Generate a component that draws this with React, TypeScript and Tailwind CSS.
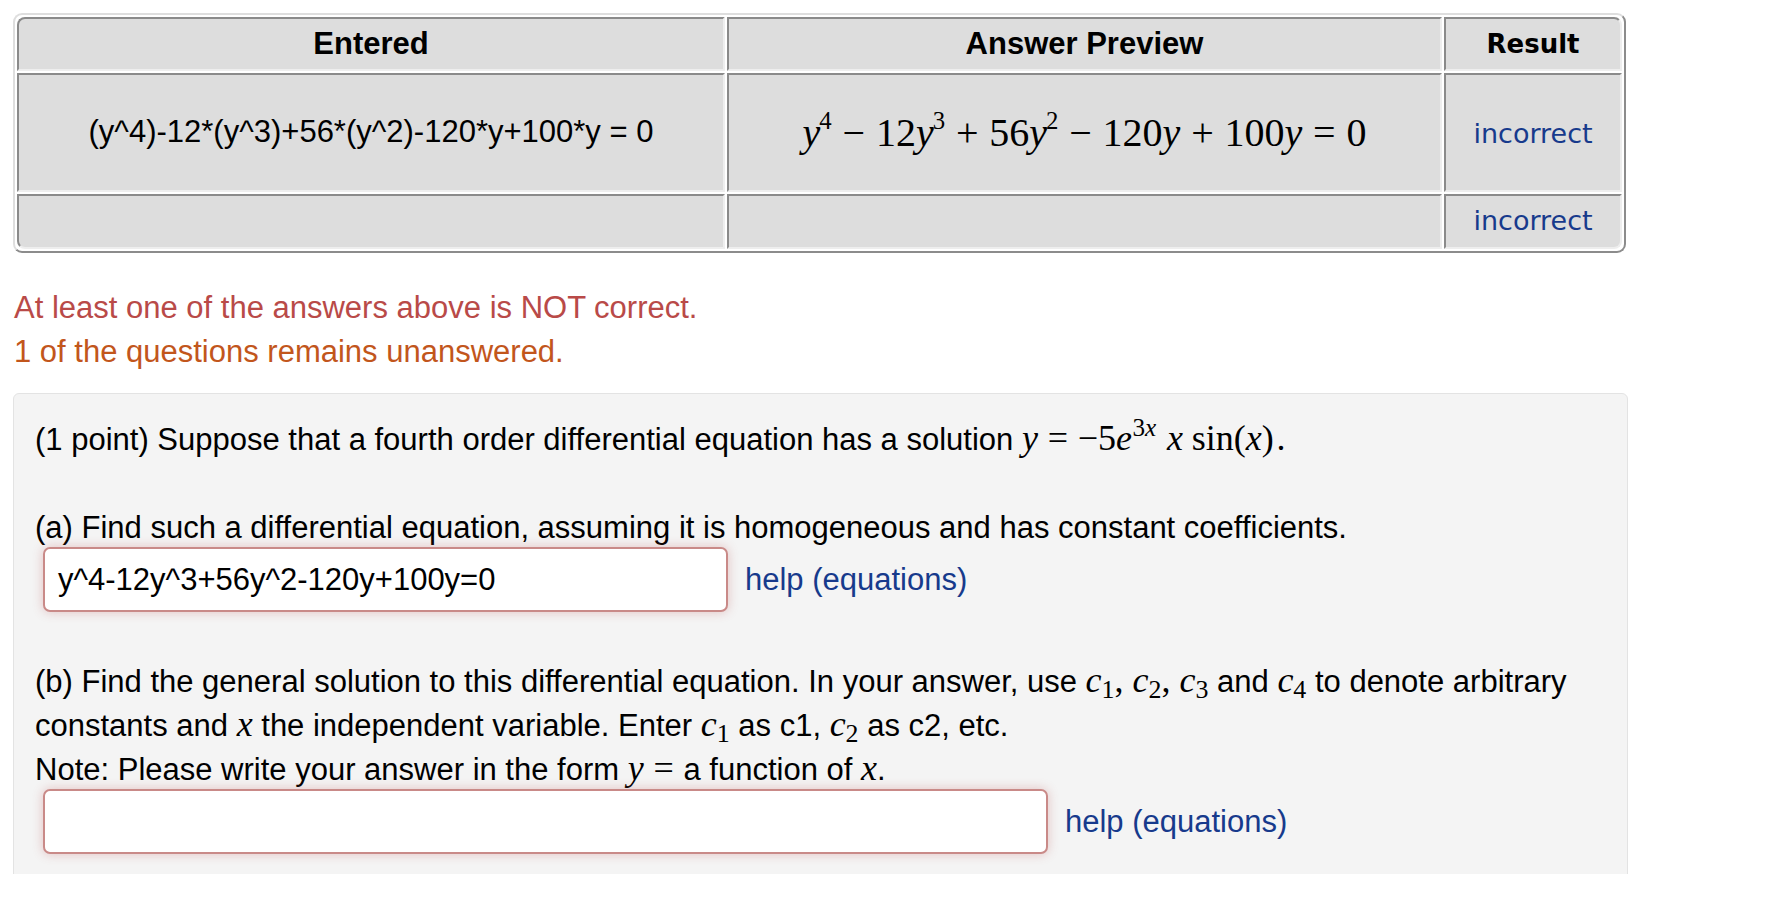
import React from "react";

const serif = 'font-["Liberation_Serif","Times_New_Roman",serif]';
const mathCls = 'font-["Liberation_Serif","Times_New_Roman",serif] text-[36px]';
const linkCls = "text-[#173a8c]";

const cellBase =
  "bg-[#dddddd] border-2 border-t-[#8a8a8a] border-l-[#8a8a8a] border-b-[#eeeeee] border-r-[#eeeeee] text-center align-middle p-0";

function V({ children }: { children: React.ReactNode }) {
  return <i className="italic">{children}</i>;
}

function Op({ children }: { children: React.ReactNode }) {
  return <span className="mx-[0.27em]">{children}</span>;
}

function C({ n }: { n: number }) {
  return (
    <span className={mathCls}>
      <V>c</V>
      <sub className="text-[72%] not-italic">{n}</sub>
    </span>
  );
}

function PreviewEquation() {
  const sup = "text-[62%] -top-[0.66em] -ml-[0.04em]";
  return (
    <span className={`${serif} text-[40px] text-black`}>
      <V>y</V>
      <sup className={sup}>4</sup>
      <Op>−</Op>12<V>y</V>
      <sup className={sup}>3</sup>
      <Op>+</Op>56<V>y</V>
      <sup className={sup}>2</sup>
      <Op>−</Op>120<V>y</V>
      <Op>+</Op>100<V>y</V>
      <Op>=</Op>0
    </span>
  );
}

function AttemptTable() {
  return (
    <table className="table-fixed border-separate border-spacing-[2px] w-[1613px] rounded-[9px] border-2 border-t-[#dedede] border-l-[#dedede] border-b-[#8c8c8c] border-r-[#8c8c8c]">
      <thead>
        <tr>
          <th className={`${cellBase} w-[708px] h-[54px] rounded-tl-[8px] text-[31px] font-bold`}>Entered</th>
          <th className={`${cellBase} w-[715px] h-[54px] text-[31px] font-bold`}>Answer Preview</th>
          <th
            className={`${cellBase} w-[178px] h-[54px] rounded-tr-[8px] text-[26px] font-bold font-["DejaVu_Sans",Verdana,sans-serif]`}
          >
            Result
          </th>
        </tr>
      </thead>
      <tbody>
        <tr>
          <td className={`${cellBase} h-[119px] text-[31px]`}>(y^4)-12*(y^3)+56*(y^2)-120*y+100*y = 0</td>
          <td className={`${cellBase} h-[119px]`}>
            <PreviewEquation />
          </td>
          <td
            className={`${cellBase} h-[119px] pt-[4px] bg-[#cd9595] text-[27px] font-["DejaVu_Sans",Verdana,sans-serif] ${linkCls}`}
          >
            incorrect
          </td>
        </tr>
        <tr>
          <td className={`${cellBase} h-[55px] rounded-bl-[8px]`}></td>
          <td className={`${cellBase} h-[55px]`}></td>
          <td
            className={`${cellBase} h-[55px] rounded-br-[8px] bg-[#cd9595] text-[27px] font-["DejaVu_Sans",Verdana,sans-serif] ${linkCls}`}
          >
            incorrect
          </td>
        </tr>
      </tbody>
    </table>
  );
}

function AnswerInput({ value, width }: { value: string; width: string }) {
  return (
    <div
      className={`${width} h-[65px] flex items-center bg-white border-2 border-[#c98a88] rounded-[7px] pl-[13px] shadow-[0_0_11px_rgba(185,74,72,0.3)] text-[31px] text-black`}
    >
      {value}
    </div>
  );
}

export default function App() {
  return (
    <div className='w-[1770px] h-[874px] overflow-hidden bg-white font-["Liberation_Sans",Arial,sans-serif] text-black pl-[13px] pt-[13px]'>
      <AttemptTable />

      {/* summary messages */}
      <div className="mt-[33px] text-[31px] leading-[44px] pl-[1px]">
        <div className="text-[#b94a48]">At least one of the answers above is NOT correct.</div>
        <div className="text-[#c2561c]">1 of the questions remains unanswered.</div>
      </div>

      {/* problem body */}
      <div className="mt-[19px] w-[1615px] h-[600px] bg-[#f4f4f4] border border-[#e3e3e3] rounded-[6px] pl-[21px] pt-[22px] text-[31px] leading-[44px]">
        <p>
          (1 point) Suppose that a fourth order differential equation has a solution{" "}
          <span className={mathCls}>
            <V>y</V>
            <Op>=</Op>−5<V>e</V>
            <sup className="text-[70%] -top-[0.55em] ml-[0.02em]">
              3<V>x</V>
            </sup>
            <V>
              <span className="ml-[0.3em]">x</span>
            </V>
            <span className="ml-[0.24em]">sin</span>(<V>x</V>)<span className="ml-[0.08em]">.</span>
          </span>
        </p>

        <p className="mt-[44px]">
          (a) Find such a differential equation, assuming it is homogeneous and has constant coefficients.
        </p>
        <div className="flex items-center gap-[17px] ml-[8px] -mt-[3px]">
          <AnswerInput value="y^4-12y^3+56y^2-120y+100y=0" width="w-[685px]" />
          <span className={linkCls}>help (equations)</span>
        </div>

        <div className="mt-[47px] leading-[43px]">
          <p>
            (b) Find the general solution to this differential equation. In your answer, use <C n={1} />
            <span className={mathCls}>, </span>
            <C n={2} />
            <span className={mathCls}>, </span>
            <C n={3} /> and <C n={4} /> to denote arbitrary
          </p>
          <p>
            constants and{" "}
            <span className={mathCls}>
              <V>x</V>
            </span>{" "}
            the independent variable. Enter <C n={1} /> as c1, <C n={2} /> as c2, etc.
          </p>
          <p>
            Note: Please write your answer in the form{" "}
            <span className={mathCls}>
              <V>y</V>
              <Op>=</Op>
            </span>
            a function of{" "}
            <span className={mathCls}>
              <V>x</V>
            </span>
            .
          </p>
        </div>
        <div className="flex items-center gap-[17px] ml-[8px] -mt-[2px]">
          <AnswerInput value="" width="w-[1005px]" />
          <span className={linkCls}>help (equations)</span>
        </div>
      </div>
    </div>
  );
}
